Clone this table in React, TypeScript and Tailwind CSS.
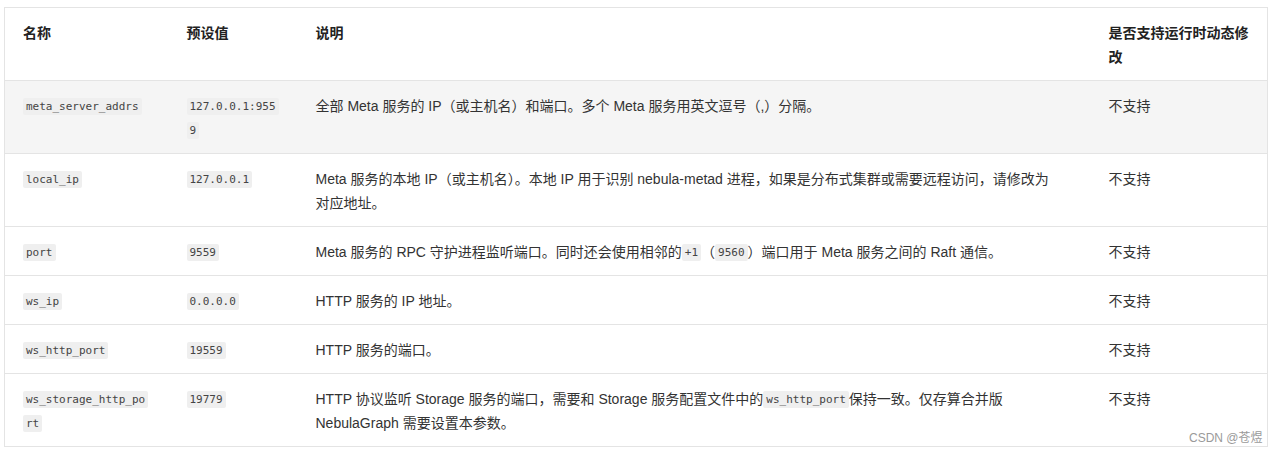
import React from "react";

type Part = string | { code: string };

const rows: { name: string; value: string; desc: Part[]; dyn: string; shade?: boolean }[] = [
  {
    name: "meta_server_addrs",
    value: "127.0.0.1:9559",
    desc: ["全部 Meta 服务的 IP（或主机名）和端口。多个 Meta 服务用英文逗号（,）分隔。"],
    dyn: "不支持",
    shade: true,
  },
  {
    name: "local_ip",
    value: "127.0.0.1",
    desc: [
      "Meta 服务的本地 IP（或主机名）。本地 IP 用于识别 nebula-metad 进程，如果是分布式集群或需要远程访问，请修改为对应地址。",
    ],
    dyn: "不支持",
  },
  {
    name: "port",
    value: "9559",
    desc: [
      "Meta 服务的 RPC 守护进程监听端口。同时还会使用相邻的",
      { code: "+1" },
      "（",
      { code: "9560" },
      "）端口用于 Meta 服务之间的 Raft 通信。",
    ],
    dyn: "不支持",
  },
  { name: "ws_ip", value: "0.0.0.0", desc: ["HTTP 服务的 IP 地址。"], dyn: "不支持" },
  { name: "ws_http_port", value: "19559", desc: ["HTTP 服务的端口。"], dyn: "不支持" },
  {
    name: "ws_storage_http_port",
    value: "19779",
    desc: [
      "HTTP 协议监听 Storage 服务的端口，需要和 Storage 服务配置文件中的",
      { code: "ws_http_port" },
      "保持一致。仅存算合并版 NebulaGraph 需要设置本参数。",
    ],
    dyn: "不支持",
  },
];

const Code = ({ children }: { children: string }) => (
  <code className="font-['DejaVu_Sans_Mono','Liberation_Mono',monospace] text-[11px] leading-[14px] align-[1px] text-[#444] bg-[#efefef] rounded-[2px] px-[3px] py-[2px] break-all [box-decoration-break:clone]">
    {children}
  </code>
);

const cell = "align-top px-[18px] pt-[13px] pb-[11px]";

export default function App() {
  return (
    <div className="bg-white w-[1272px] h-[454px] pt-[7px] pl-[4px] relative font-['Liberation_Sans','Noto_Sans_CJK_SC',sans-serif]">
      <table className="table-fixed border-collapse w-[1263px] text-[14px] leading-6 text-[#333]">
        <colgroup>
          <col className="w-[164px]" />
          <col className="w-[129px]" />
          <col className="w-[793px]" />
          <col className="w-[177px]" />
        </colgroup>
        <thead>
          <tr className="border border-[#e4e4e4]">
            {["名称", "预设值", "说明", "是否支持运行时动态修改"].map((h) => (
              <th key={h} className={`text-left font-bold text-[#222] ${cell}`}>
                {h}
              </th>
            ))}
          </tr>
        </thead>
        <tbody>
          {rows.map((r) => (
            <tr key={r.name} className={`border border-[#e4e4e4] ${r.shade ? "bg-[#f5f5f5]" : ""}`}>
              <td className={cell}>
                <Code>{r.name}</Code>
              </td>
              <td className={cell}>
                <Code>{r.value}</Code>
              </td>
              <td className={`${cell} pr-[32px]`}>
                {r.desc.map((p, i) => (typeof p === "string" ? <span key={i}>{p}</span> : <Code key={i}>{p.code}</Code>))}
              </td>
              <td className={cell}>{r.dyn}</td>
            </tr>
          ))}
        </tbody>
      </table>
      <div className="absolute left-[1189px] top-[430px] text-[12px] text-[#9a9a9a] leading-4">CSDN @苍煜</div>
    </div>
  );
}
